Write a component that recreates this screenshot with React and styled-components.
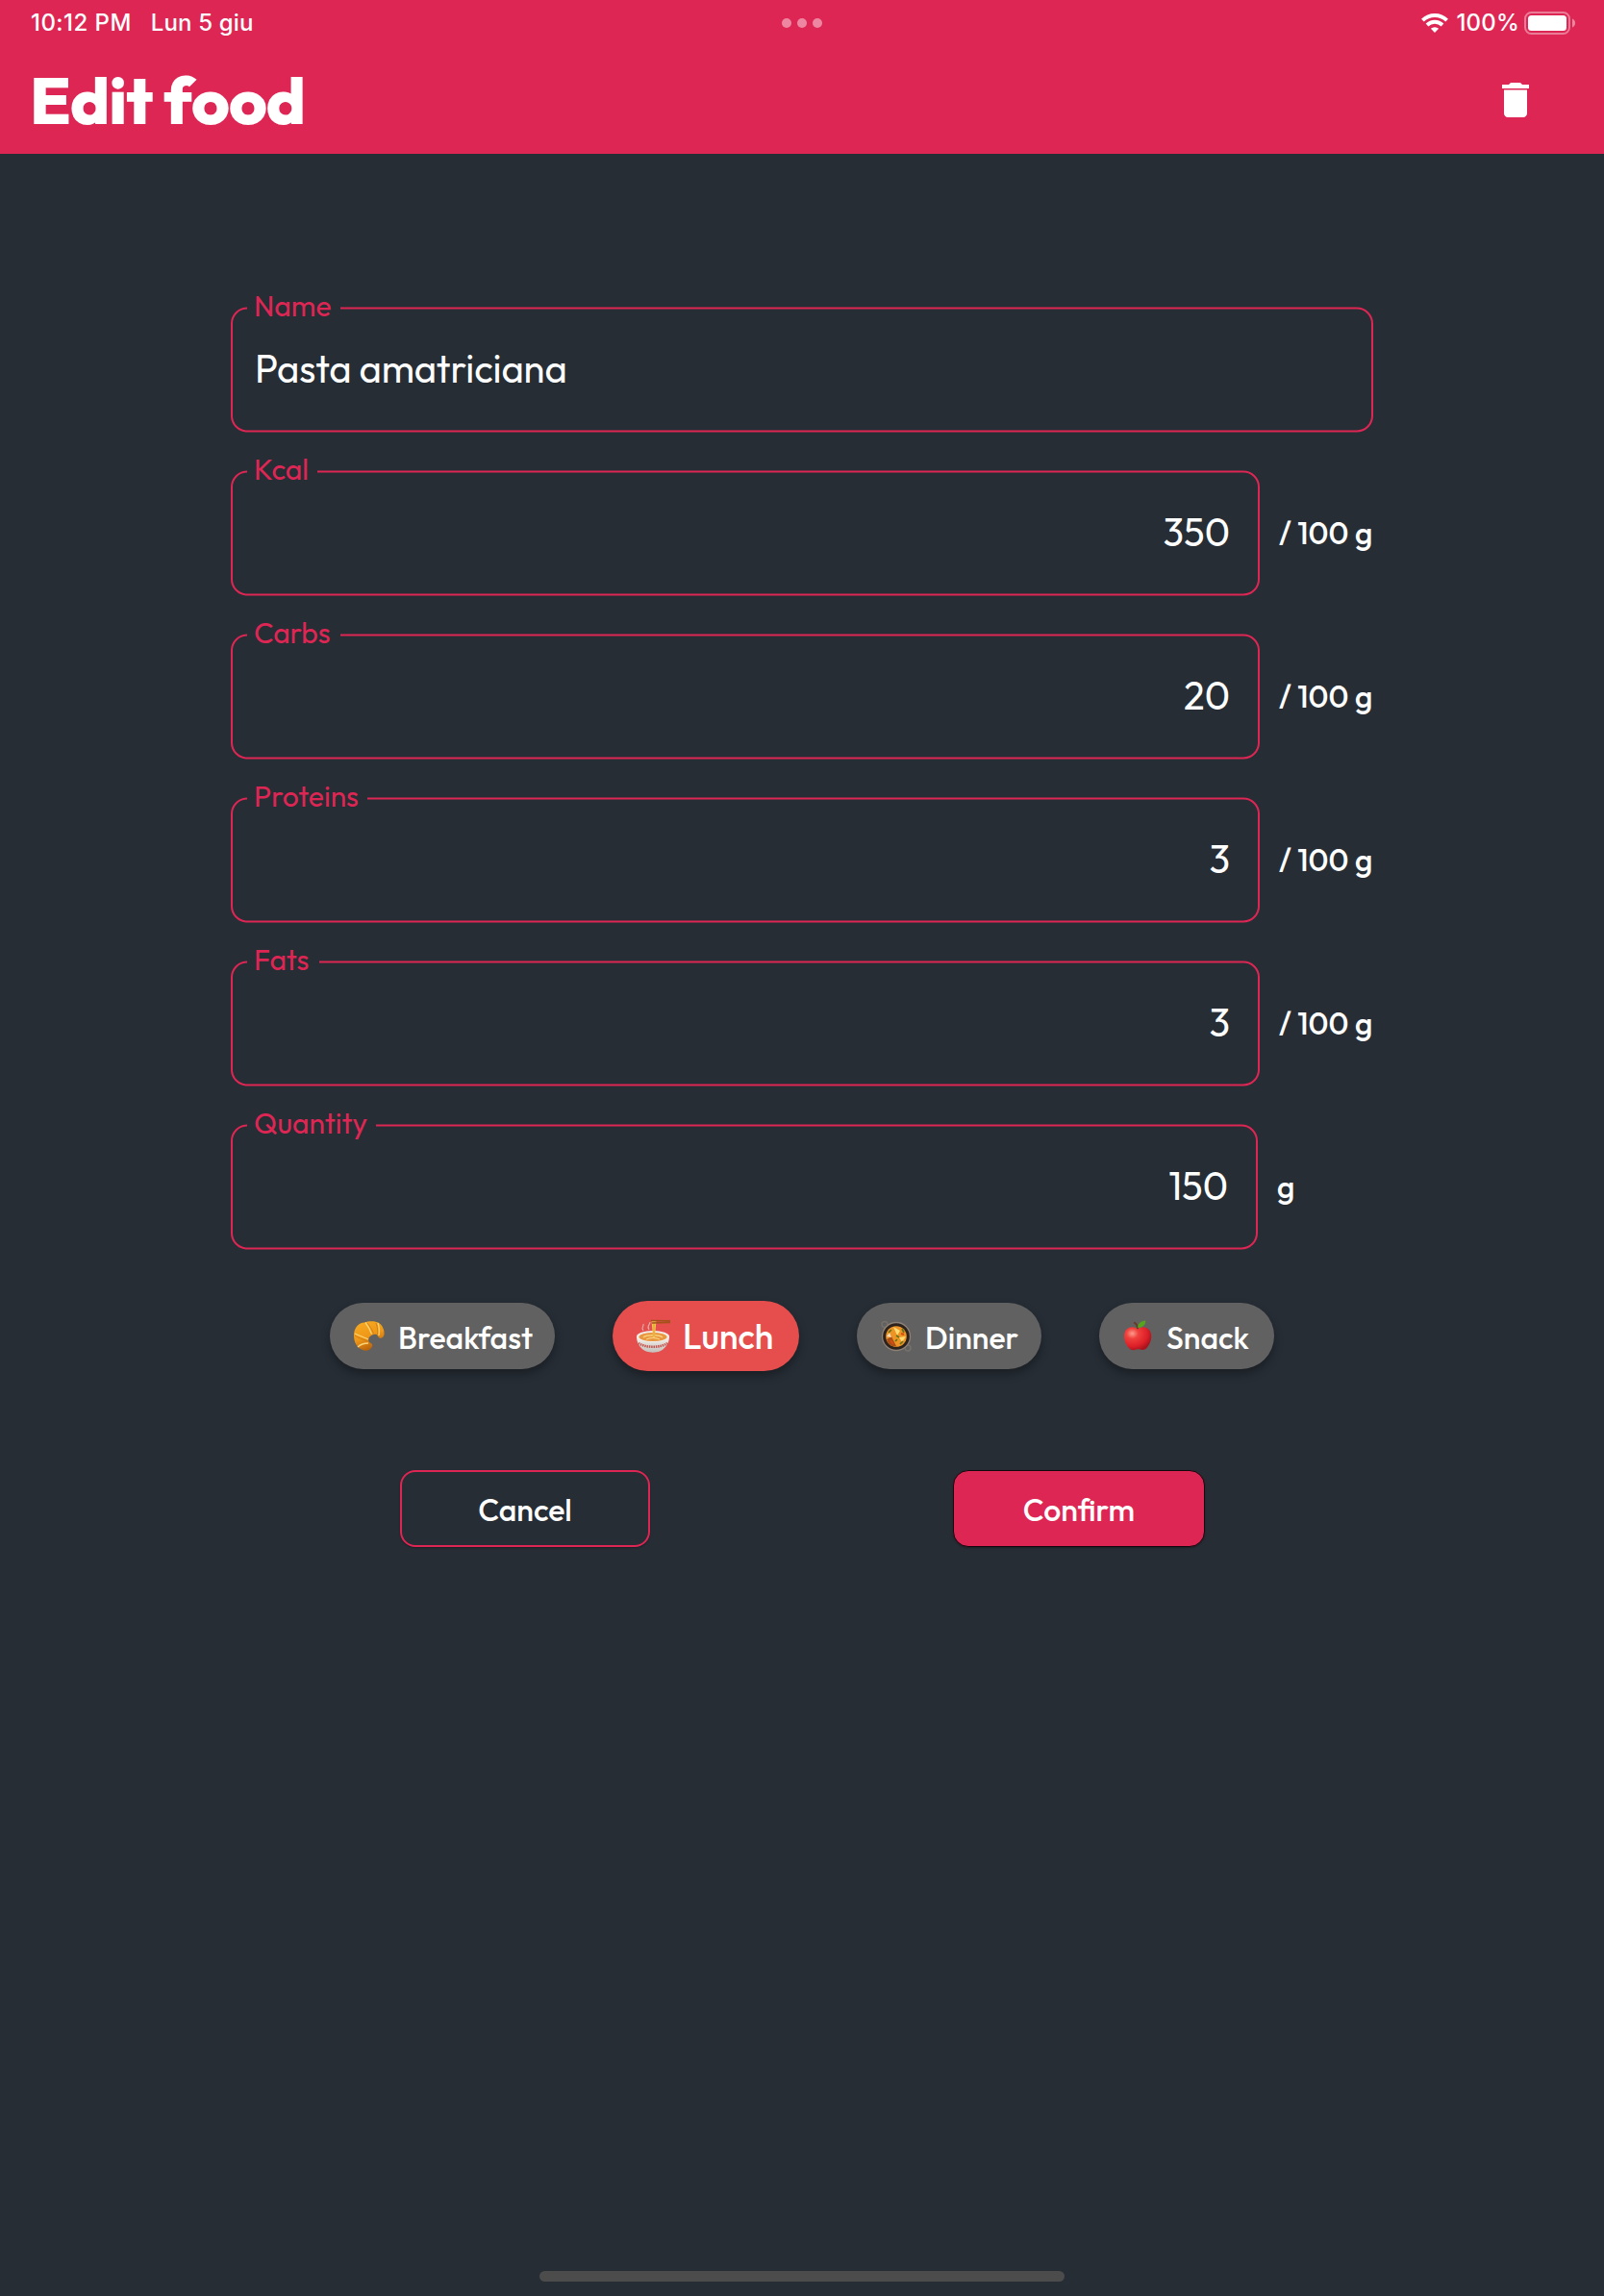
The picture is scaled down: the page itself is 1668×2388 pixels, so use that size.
import React from "react";
import styled, { createGlobalStyle } from "styled-components";

const c = { pink: "#de2654", bg: "#262d35", grey: "#616161", red: "#e64d4d" };

const GlobalStyle = createGlobalStyle`
  * { box-sizing: border-box; }
  body { margin: 0; background: ${c.bg}; }
`;

const Screen = styled.div`
  display: flex;
  flex-direction: column;
  width: 1668px;
  height: 2388px;
  overflow: hidden;
  background: ${c.bg};
  color: #fff;
  font-family: Outfit, Lato, sans-serif;
`;

const Header = styled.header`
  display: flex;
  flex-direction: column;
  height: 160px;
  flex: none;
  background: ${c.pink};
`;

const StatusBar = styled.div`
  display: grid;
  grid-template-columns: 1fr auto 1fr;
  align-items: center;
  height: 48px;
  padding: 0 30px;
  font: 500 24px/48px Inter, sans-serif;
`;

const StatusGroup = styled.div`
  display: flex;
  align-items: center;
  padding-left: 2px;
  justify-content: ${(p) => (p.$end ? "flex-end" : "flex-start")};
`;

const StatusText = styled.span`
  white-space: nowrap;
  font-weight: 450;
  letter-spacing: ${(p) => p.$track || 0}px;
  margin-right: ${(p) => p.$gap || 0}px;
`;

const Dots = styled.div`
  display: flex;
  gap: 6px;
`;

const Dot = styled.i`
  width: 10px;
  height: 10px;
  border-radius: 50%;
  background: rgba(255, 255, 255, 0.45);
`;

const WifiSvg = styled.svg`
  width: 28px;
  height: 20px;
  margin-right: 8px;
`;

const BatterySvg = styled.svg`
  width: 53px;
  height: 24px;
`;

const TitleBar = styled.div`
  display: flex;
  justify-content: space-between;
  height: 112px;
  padding: 16px 68px 0 31px;
`;

const Title = styled.h1`
  margin: 0;
  font-size: 68.5px;
  line-height: 80px;
  font-weight: 780;
  letter-spacing: -0.9px;
`;

const TrashButton = styled.button`
  width: 48px;
  height: 48px;
  margin-top: 16px;
  padding: 0;
  border: 0;
  background: none;
  color: #fff;
`;

const Form = styled.main`
  display: flex;
  flex-direction: column;
  flex: 1;
  width: 1188px;
  margin-left: 240px;
  padding-top: 141px;
`;

const Row = styled.div`
  display: flex;
  height: 170px;
`;

const Fieldset = styled.fieldset`
  width: ${(p) => p.$width}px;
  height: 148px;
  margin: 0;
  padding: 0 29px 0 23px;
  border: 2px solid ${c.pink};
  border-radius: 17px;
  min-width: 0;
  transform: translateY(0.5px);
`;

const Legend = styled.legend`
  height: 38px;
  margin-left: -8px;
  padding: 0 0 0 7px;
  width: ${(p) => p.$width}px;
  color: ${c.pink};
  font-size: 30px;
  line-height: 33px;
  white-space: nowrap;
`;

const Value = styled.div`
  padding-top: 18px;
  font-size: 40px;
  line-height: 50px;
  font-weight: 430;
  letter-spacing: ${(p) => (p.$right ? 0 : -0.12)}px;
  text-align: ${(p) => (p.$right ? "right" : "left")};
`;

const Unit = styled.span`
  padding: 63px 0 0 20px;
  font-size: 32px;
  line-height: 40px;
  font-weight: 480;
  white-space: nowrap;
`;

const Chips = styled.div`
  display: flex;
  align-items: center;
  gap: 60px;
  margin: 32px 0 0 103px;
  height: 73px;
`;

const Chip = styled.button`
  display: flex;
  align-items: center;
  flex: none;
  width: ${(p) => p.$width}px;
  height: ${(p) => (p.$active ? 73 : 69)}px;
  padding: 0 0 0 24px;
  border: 0;
  border-radius: 37px;
  background: ${(p) => (p.$active ? c.red : c.grey)};
  box-shadow: 0 5px 10px rgba(0, 0, 0, 0.32);
  color: #fff;
  font: 480 ${(p) => (p.$active ? 35.5 : 32)}px/40px Outfit, Lato, sans-serif;
`;

const ChipIcon = styled.svg`
  flex: none;
  width: ${(p) => p.$size}px;
  height: ${(p) => p.$size}px;
`;

const ChipLabel = styled.span`
  padding-top: ${(p) => (p.$active ? 1 : 3)}px;
  margin-left: 13px;
`;

const Actions = styled.div`
  display: flex;
  gap: 315px;
  margin: 103px 0 0 176px;
`;

const ActionButton = styled.button`
  width: ${(p) => (p.$primary ? 262 : 260)}px;
  height: 80px;
  padding: 1px 0 0;
  border: ${(p) => (p.$primary ? "1px solid #16070f" : `2px solid ${c.pink}`)};
  border-radius: 16px;
  background: ${(p) => (p.$primary ? c.pink : c.bg)};
  box-shadow: 0 1px 2px rgba(0, 0, 0, 0.3);
  color: #fff;
  font: 480 32px/40px Outfit, Lato, sans-serif;
`;

const HomeIndicator = styled.div`
  width: 546px;
  height: 11px;
  flex: none;
  margin: 0 auto 15px;
  border-radius: 6px;
  background: #4c4c4c;
`;

const Wifi = () => (
  <WifiSvg viewBox="0 0 28 20">
    <g fill="none" stroke="#fff" strokeWidth="3.9">
      <path d="M1.4 7.1a18 18 0 0 1 25.2 0" />
      <path d="M6 12a11.5 11.5 0 0 1 16 0" />
    </g>
    <path d="M14 20l-4.1-4.2a6 6 0 0 1 8.2 0z" fill="#fff" />
  </WifiSvg>
);

const Battery = () => (
  <BatterySvg viewBox="0 0 53 24">
    <rect x="1" y="1" width="46" height="22" rx="6.5" fill="none" stroke="#fff" strokeOpacity=".4" strokeWidth="2" />
    <rect x="4" y="4" width="40" height="16" rx="3.5" fill="#fff" />
    <path d="M50 7.5c4 1.5 4 7.5 0 9z" fill="#fff" fillOpacity=".45" />
  </BatterySvg>
);

const Trash = () => (
  <svg width="48" height="48" viewBox="0 0 24 24" fill="currentColor">
    <path d="M6 19c0 1.100.9 2 2 2h8c1.100 0 2-.9 2-2V6.800H6zM19 4h-3.500l-1-1h-5l-1 1H5v2h14z" />
  </svg>
);

const Croissant = () => (
  <ChipIcon $size={34} viewBox="0 0 34 34">
    <defs>
      <linearGradient id="crust" x1="0" y1="0" x2=".4" y2="1">
        <stop offset="0" stopColor="#f6ad26" />
        <stop offset=".6" stopColor="#ef9716" />
        <stop offset="1" stopColor="#b9630c" />
      </linearGradient>
    </defs>
    <path d="M1 16C1 8 6 2.500 12 2.500c5-2 12-1.500 15 .5 4 2.500 6 8 5.500 12-.5 3-3 4.500-5 3.500-1.500-.7-1.500-3-3-3.500-3-.8-7 1.500-8 4-1 2 0 4 2 5 2.500 1 2 3.500.5 5-2 3-6 3.500-10 1.500C4 28 1 23 1 16z" fill="url(#crust)" />
    <path d="M13 2.500c3 4 5 8 6.500 12M2 14c4 2 10 4 14 6M26 3c1.500 4 1.500 8 1 13M5 28c3-3 7-4 11-4" fill="none" stroke="#f9d478" strokeWidth="1.300" />
    <path d="M15 3c3 4 5 7 6.500 11M2 16c4 3 9 4 13 6M24 3c1.500 4 2 8 1.500 12" fill="none" stroke="#c8740e" strokeWidth=".7" />
  </ChipIcon>
);

const Noodles = () => (
  <ChipIcon $size={36} viewBox="0 0 36 36">
    <defs>
      <linearGradient id="bowl" x1="0" y1="0" x2="0" y2="1">
        <stop offset="0" stopColor="#f7f3ee" />
        <stop offset="1" stopColor="#c4c1bd" />
      </linearGradient>
    </defs>
    <path d="M8 12c-3-4 1-4 0-7M14 11c-3-4 1-5 1-8" fill="none" stroke="#dcb3ae" strokeWidth="1.100" />
    <path d="M1 18c0 9 6 14 10 15.500 4 1.500 10 1.500 14 0C30 31 35 26 35 18z" fill="url(#bowl)" />
    <ellipse cx="18" cy="18" rx="17" ry="6" fill="#f1eeea" />
    <ellipse cx="18" cy="18.500" rx="14.500" ry="4.500" fill="#e9963f" />
    <path d="M8 19c3-3 17-3 20 0M11 21c4-2 10-2 14 0" fill="none" stroke="#f7ce79" strokeWidth="1.300" />
    <path d="M16.500 1h5l-1.500 18h-2z" fill="#f2c34d" />
    <path d="M19 3v15" stroke="#d38b22" strokeWidth=".6" />
    <path d="M16 1.500l20 .3M17 4l19-.5" stroke="#a4521c" strokeWidth="1.700" />
    <path d="M3 25c7 5 23 5 30 0" fill="none" stroke="#c2564f" strokeWidth="2.600" strokeDasharray="1.500 .8" />
  </ChipIcon>
);

const Pan = () => (
  <ChipIcon $size={34} viewBox="0 0 34 34">
    <circle cx="5" cy="4.500" r="3" fill="none" stroke="#77716b" strokeWidth="1.400" />
    <circle cx="29" cy="29" r="3" fill="none" stroke="#77716b" strokeWidth="1.400" />
    <circle cx="17" cy="17" r="14.500" fill="#2c231f" stroke="#8d8075" strokeWidth="1.300" />
    <circle cx="17" cy="17" r="10.800" fill="#ee9425" />
    <path d="M7 20l5-3 5 10c-5 1-9-2-10-7z" fill="#a84e16" />
    <path d="M14 7l7 4-3 5zM20 18l7-1-4 6z" fill="#ffdb73" />
    <path d="M7 17l3-4 2 5z" fill="#f4ddb8" />
    <path d="M12 10l-3 3M23 9l2 4M17 16l3 2M21 25l3-3M16 22l2-2" stroke="#63731a" strokeWidth="1.700" />
    <path d="M11 21l3 4M22 14l3 1" stroke="#d64e13" strokeWidth="2" />
  </ChipIcon>
);

const Apple = () => (
  <ChipIcon $size={33} viewBox="0 0 34 34">
    <defs>
      <radialGradient id="skin" cx=".3" cy=".28" r=".75">
        <stop offset="0" stopColor="#ff9b8b" />
        <stop offset=".3" stopColor="#f0403c" />
        <stop offset=".75" stopColor="#dc1f28" />
        <stop offset="1" stopColor="#a9141d" />
      </radialGradient>
    </defs>
    <path d="M16.500 9C12 6.500 7 7 4 10.500c-3.500 4.500-2 13 2 18 2.500 3.500 6 4.500 9 3 1.500-.5 3-.5 4 0 4 1.500 7-.5 9-4 3.500-5 4.500-12.500 1-17C26 7 21 6.500 16.500 9z" fill="url(#skin)" />
    <path d="M12.500 2.500c2 1 4 4 4 7" fill="none" stroke="#6a3a23" strokeWidth="2" />
    <path d="M16.500 8C17 3.500 20 1 25 .5c.5 4-3 8-8.500 7.500z" fill="#55a51c" />
  </ChipIcon>
);

const fields = [
  { label: "Name", value: "Pasta amatriciana", width: 1188, gap: 97 },
  { label: "Kcal", value: "350", width: 1070, gap: 73, unit: "/ 100 g" },
  { label: "Carbs", value: "20", width: 1070, gap: 97, unit: "/ 100 g" },
  { label: "Proteins", value: "3", width: 1070, gap: 125, unit: "/ 100 g" },
  { label: "Fats", value: "3", width: 1070, gap: 75, unit: "/ 100 g" },
  { label: "Quantity", value: "150", width: 1068, gap: 134, unit: "g" },
];

const meals = [
  { label: "Breakfast", width: 234, icon: <Croissant /> },
  { label: "Lunch", width: 194, icon: <Noodles />, active: true },
  { label: "Dinner", width: 192, icon: <Pan /> },
  { label: "Snack", width: 182, icon: <Apple /> },
];

export default function App() {
  return (
    <Screen>
      <GlobalStyle />
      <Header>
        <StatusBar>
          <StatusGroup>
            <StatusText $gap={20} $track={0.45}>10:12 PM</StatusText>
            <StatusText $track={0.15}>Lun 5 giu</StatusText>
          </StatusGroup>
          <Dots><Dot /><Dot /><Dot /></Dots>
          <StatusGroup $end>
            <Wifi />
            <StatusText $gap={5} $track={0.2}>100%</StatusText>
            <Battery />
          </StatusGroup>
        </StatusBar>
        <TitleBar>
          <Title>Edit food</Title>
          <TrashButton aria-label="Delete"><Trash /></TrashButton>
        </TitleBar>
      </Header>
      <Form>
        {fields.map((f) => (
          <Row key={f.label}>
            <Fieldset $width={f.width}>
              <Legend $width={f.gap}>{f.label}</Legend>
              <Value $right={!!f.unit}>{f.value}</Value>
            </Fieldset>
            {f.unit && <Unit>{f.unit}</Unit>}
          </Row>
        ))}
        <Chips>
          {meals.map((m) => (
            <Chip key={m.label} $width={m.width} $active={m.active}>
              {m.icon}
              <ChipLabel $active={m.active}>{m.label}</ChipLabel>
            </Chip>
          ))}
        </Chips>
        <Actions>
          <ActionButton>Cancel</ActionButton>
          <ActionButton $primary>Confirm</ActionButton>
        </Actions>
      </Form>
      <HomeIndicator />
    </Screen>
  );
}
